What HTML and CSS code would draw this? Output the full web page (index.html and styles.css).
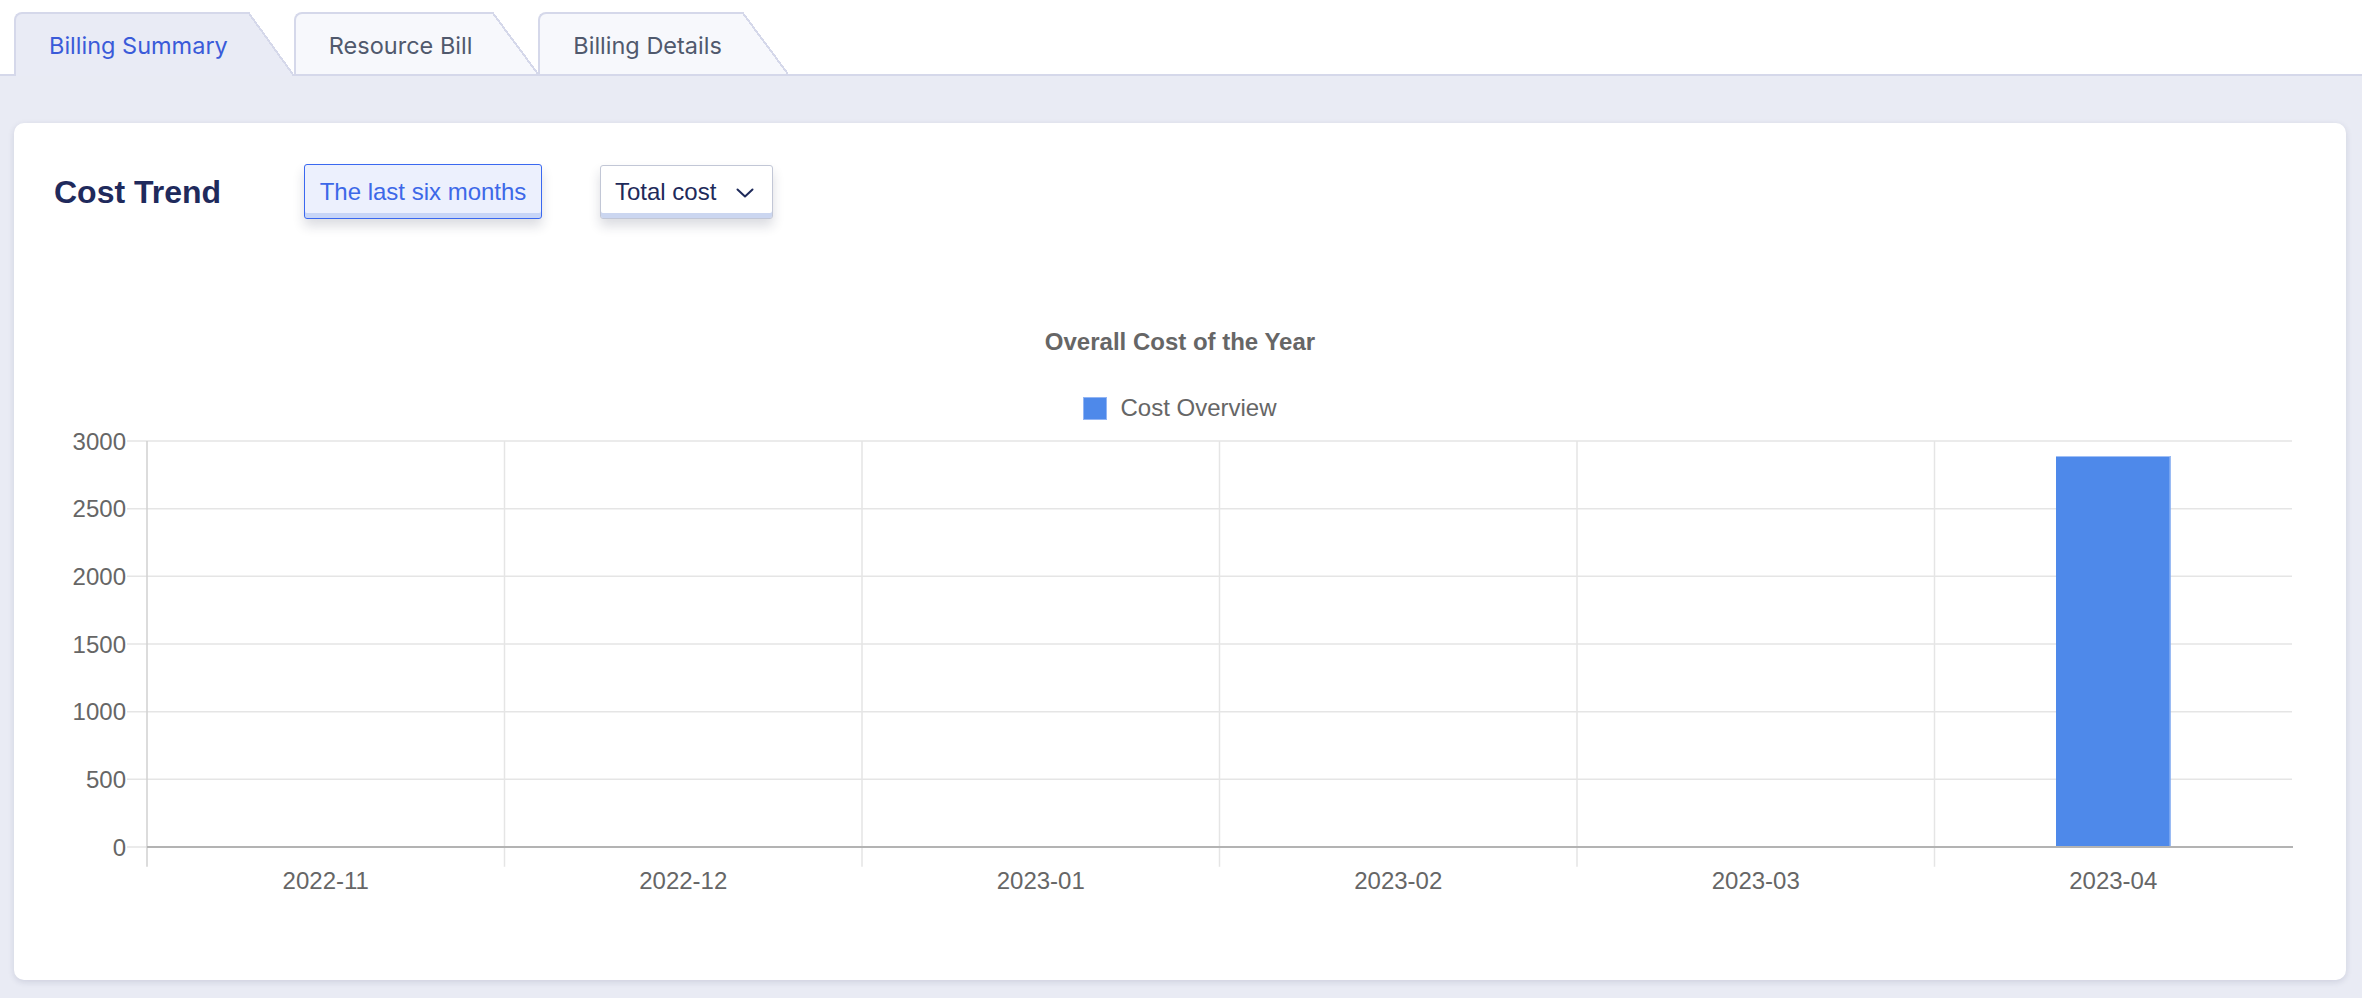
FILE: index.html
```html
<!DOCTYPE html>
<html lang="en">
<head>
<meta charset="utf-8">
<title>Billing Summary</title>
<link rel="stylesheet" href="styles.css">
</head>
<body>
  <nav class="tabbar">
    <a class="tab tab-active">Billing Summary</a>
    <a class="tab">Resource Bill</a>
    <a class="tab">Billing Details</a>
  </nav>
  <main class="content">
    <section class="card">
      <header class="card-head">
        <h2 class="card-title">Cost Trend</h2>
        <button class="range-btn" type="button">The last six months</button>
        <button class="select" type="button">
          <span>Total cost</span>
          <svg class="chevron" width="18" height="10" viewBox="0 0 18 10"><path d="M1.5 1.5 L9 8.5 L16.5 1.5" fill="none" stroke="#1e2a5a" stroke-width="2" stroke-linecap="round" stroke-linejoin="round"/></svg>
        </button>
      </header>
      <div class="chart">
        <div class="chart-title">Overall Cost of the Year</div>
        <div class="legend"><span class="swatch"></span><span>Cost Overview</span></div>
        <svg class="plot" width="2332" height="480" viewBox="0 0 2332 480">
          <g stroke="#e5e5e5" stroke-width="1.5">
            <line x1="113" y1="19" x2="2278" y2="19"/>
            <line x1="113" y1="86.67" x2="2278" y2="86.67"/>
            <line x1="113" y1="154.33" x2="2278" y2="154.33"/>
            <line x1="113" y1="222" x2="2278" y2="222"/>
            <line x1="113" y1="289.67" x2="2278" y2="289.67"/>
            <line x1="113" y1="357.33" x2="2278" y2="357.33"/>
            <line x1="113" y1="425" x2="133" y2="425"/>
            <line x1="490.5" y1="19" x2="490.5" y2="444.7"/>
            <line x1="848" y1="19" x2="848" y2="444.7"/>
            <line x1="1205.5" y1="19" x2="1205.5" y2="444.7"/>
            <line x1="1563" y1="19" x2="1563" y2="444.7"/>
            <line x1="1920.5" y1="19" x2="1920.5" y2="444.7"/>
          </g>
          <line x1="133" y1="19" x2="133" y2="444.7" stroke="#d0d0d0" stroke-width="1.5"/>
          <rect x="2042" y="34" width="114.6" height="391" fill="#4e89ea"/>
          <polyline points="2042,34.5 2156,34.5 2156,425" fill="none" stroke="#9fbff6" stroke-width="1"/>
          <line x1="133" y1="425" x2="2279" y2="425" stroke="#b3b3b3" stroke-width="2"/>
          <g class="ytick" text-anchor="end">
            <text x="112" y="27.5">3000</text>
            <text x="112" y="95.2">2500</text>
            <text x="112" y="162.8">2000</text>
            <text x="112" y="230.5">1500</text>
            <text x="112" y="298.2">1000</text>
            <text x="112" y="365.8">500</text>
            <text x="112" y="433.5">0</text>
          </g>
          <g class="xtick" text-anchor="middle">
            <text x="311.75" y="467">2022-11</text>
            <text x="669.25" y="467">2022-12</text>
            <text x="1026.75" y="467">2023-01</text>
            <text x="1384.25" y="467">2023-02</text>
            <text x="1741.75" y="467">2023-03</text>
            <text x="2099.25" y="467">2023-04</text>
          </g>
        </svg>
      </div>
    </section>
  </main>
</body>
</html>
```

FILE: styles.css
```css
* { box-sizing: border-box; }

html, body {
  margin: 0;
  padding: 0;
}

body {
  background: #e9ebf4;
  font-family: "Liberation Sans", Arial, sans-serif;
  width: 2362px;
  height: 998px;
  overflow: hidden;
}

/* ---------- tabs ---------- */
.tabbar {
  display: flex;
  align-items: flex-end;
  height: 76px;
  padding-left: 14px;
  background: #ffffff;
  border-bottom: 2px solid #d5d8ea;
}

.tab {
  position: relative;
  display: flex;
  align-items: center;
  height: 62px;
  margin-right: 46px;
  padding: 2px 20px 0 33px;
  font-family: Inter, "Noto Sans", sans-serif;
  font-size: 23.5px;
  color: #50596d;
  background: #f7f8fc;
  border-top: 2px solid #d5d8ea;
  border-left: 2px solid #d5d8ea;
  border-top-left-radius: 8px;
  white-space: nowrap;
  text-decoration: none;
}

.tab::after {
  content: "";
  position: absolute;
  top: -2px;
  bottom: 0;
  left: 100%;
  width: 46px;
  background: linear-gradient(to top right,
    #f7f8fc calc(50% - 1px),
    #d5d8ea calc(50% - 1px),
    #d5d8ea calc(50% + 1px),
    transparent calc(50% + 1px));
}

.tab-active {
  height: 64px;
  margin-bottom: -2px;
  padding-bottom: 2px;
  color: #3a5bd9;
  background: #e9ebf5;
}

.tab-active::after {
  background: linear-gradient(to top right,
    #e9ebf5 calc(50% - 1px),
    #d5d8ea calc(50% - 1px),
    #d5d8ea calc(50% + 1px),
    transparent calc(50% + 1px));
}

/* ---------- content ---------- */
.content {
  padding: 47px 16px 18px 14px;
}

.card {
  background: #ffffff;
  border-radius: 10px;
  box-shadow: 0 2px 6px rgba(40, 50, 90, 0.14);
  padding: 41px 0 78px 0;
}

.card-head {
  display: flex;
  align-items: center;
  height: 55px;
  padding-left: 40px;
}

.card-title {
  min-width: 250px;
  margin: 0;
  font-size: 32px;
  font-weight: 700;
  color: #1f2a5c;
  line-height: 1;
}

.range-btn {
  width: 238px;
  height: 55px;
  padding: 0 10px;
  font-family: "Liberation Sans", Arial, sans-serif;
  font-size: 24px;
  white-space: nowrap;
  color: #3d68e8;
  background: #ecf0fd;
  border: 1.5px solid #3a68f0;
  border-radius: 3px;
  box-shadow: inset 0 -5px 0 #c7d5f7, 0 7px 12px rgba(30, 40, 70, 0.16);
  cursor: pointer;
}

.select {
  display: flex;
  align-items: center;
  justify-content: space-between;
  width: 173px;
  height: 54px;
  margin-left: 58px;
  padding: 0 18px 0 14px;
  font-family: "Liberation Sans", Arial, sans-serif;
  font-size: 24px;
  white-space: nowrap;
  color: #1e2a5a;
  background: #ffffff;
  border: 1.5px solid #c2c7d6;
  border-radius: 3px;
  box-shadow: inset 0 -5px 0 #cbd6f0, 0 7px 12px rgba(30, 40, 70, 0.16);
  cursor: pointer;
}

.chevron {
  display: block;
  margin-top: 2px;
}

/* ---------- chart ---------- */
.chart {
  margin-top: 109px;
  color: #666666;
  font-family: "Liberation Sans", Arial, sans-serif;
}

.chart-title {
  text-align: center;
  font-size: 24px;
  font-weight: 700;
  line-height: 28px;
}

.legend {
  display: flex;
  align-items: center;
  justify-content: center;
  gap: 13px;
  margin-top: 38px;
  font-size: 24px;
  line-height: 28px;
}

.swatch {
  width: 24px;
  height: 23px;
  background: #4e89ea;
  border: 1px solid #92b5f4;
}

.plot {
  display: block;
}

.plot text {
  font-family: "Liberation Sans", Arial, sans-serif;
  font-size: 24px;
  fill: #666666;
}
```
